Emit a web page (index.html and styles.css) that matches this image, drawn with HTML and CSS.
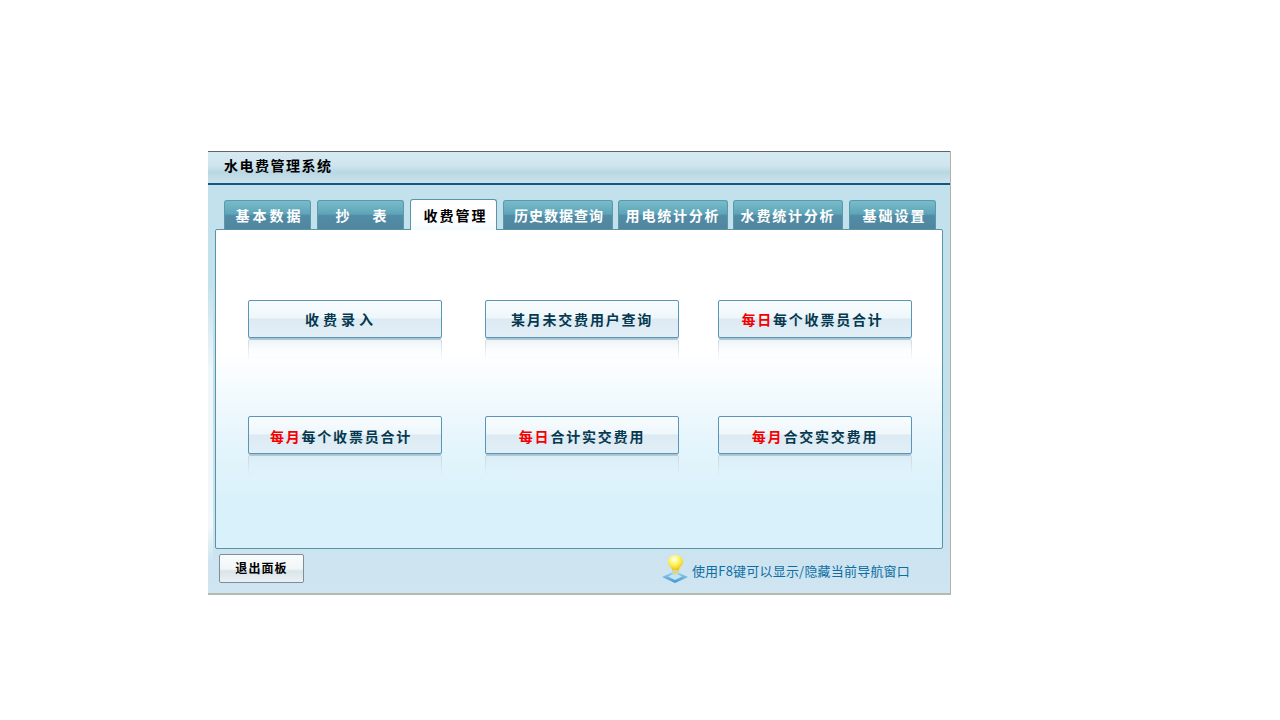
FILE: index.html
```html
<!DOCTYPE html>
<html lang="zh-CN">
<head>
<meta charset="utf-8">
<title>水电费管理系统</title>
<link rel="stylesheet" href="styles.css">
</head>
<body>
<main class="window">
  <header class="titlebar"><h1 class="title">水电费管理系统</h1></header>
  <div class="content">
    <nav class="tabs">
      <a class="tab w87 sp3 pl3">基本数据</a>
      <a class="tab w87 gap-chao"><span>抄</span><span>表</span></a>
      <a class="tab tab-active w87 sp2 pl3">收费管理</a>
      <a class="tab w110 sp1 pl1">历史数据查询</a>
      <a class="tab w110 t-narrow">用电统计分析</a>
      <a class="tab w110 t-narrow">水费统计分析</a>
      <a class="tab w87 sp2 pl3">基础设置</a>
    </nav>
    <section class="panel">
      <div class="grid">
        <button class="btn sp4 shift-l">收费录入</button>
        <button class="btn sp18">某月未交费用户查询</button>
        <button class="btn sp18 shift-s"><em>每日</em>每个收票员合计</button>
        <button class="btn sp18 shift-l low"><em>每月</em>每个收票员合计</button>
        <button class="btn sp18 low"><em>每日</em>合计实交费用</button>
        <button class="btn sp18 low"><em>每月</em>合交实交费用</button>
      </div>
    </section>
    <footer class="footer">
      <button class="exit">退出面板</button>
      <div class="hint">
        <svg class="bulb" width="27" height="28" viewBox="0 0 27 28" aria-hidden="true">
          <defs>
            <radialGradient id="glow" cx="0.42" cy="0.3" r="0.75">
              <stop offset="0" stop-color="#fffff0"/>
              <stop offset="0.5" stop-color="#fdf256"/>
              <stop offset="1" stop-color="#e9bb14"/>
            </radialGradient>
            <linearGradient id="plate" x1="0" y1="0" x2="0" y2="1">
              <stop offset="0" stop-color="#a8d8f3"/>
              <stop offset="1" stop-color="#3d94cf"/>
            </linearGradient>
          </defs>
          <path d="M0 22 L13 16 L26 22 L13 28 Z" fill="url(#plate)"/>
          <path d="M6 21.5 L13 18 L20 21.5 L13 25 Z" fill="#c2e4f6"/>
          <path d="M10 15 C10 12 6 11 6 7 C6 3 9 0 13.5 0 C18 0 21 3 21 7 C21 11 17 12 17 15 Z" fill="url(#glow)"/>
          <path d="M10 15 H17 V18 C16 20 11 20 10 18 Z" fill="#d8d59a"/>
        </svg>
        <span class="hint-text">使用F8键可以显示/隐藏当前导航窗口</span>
      </div>
    </footer>
  </div>
</main>
</body>
</html>
```

FILE: styles.css
```css
* { box-sizing: border-box; }

html, body {
  margin: 0;
  padding: 0;
  background: #fff;
}

body {
  padding: 151px 0 0 208px;
  font-family: "Noto Sans CJK SC", "Liberation Sans", sans-serif;
}

.window {
  width: 743px;
  height: 444px;
  display: flex;
  flex-direction: column;
  border-right: 1px solid #b3b2a6;
  border-bottom: 2px solid #b4b9b2;
  background:
    linear-gradient(180deg, rgba(255, 255, 255, 0) 30%, rgba(255, 255, 255, 0.75) 50%, rgba(255, 255, 255, 0.75) 85%, rgba(255, 255, 255, 0) 93%) left top / 5px 100% no-repeat,
    linear-gradient(180deg, #c2e1ed 0%, #c3e1ed 60%, #cfe5f1 100%);
}

.titlebar {
  height: 34px;
  padding-left: 16px;
  display: flex;
  align-items: center;
  border-top: 1px solid #5f6569;
  border-bottom: 2px solid #14587c;
  background: linear-gradient(180deg, #d6e9f1 0%, #cfe5ee 45%, #b9d7e2 65%, #cde3ec 100%);
}

.title {
  margin: 0 0 5px;
  font-size: 14px;
  line-height: 20px;
  font-weight: 700;
  letter-spacing: 1.5px;
  color: #000;
}

.content {
  flex: 1;
  display: flex;
  flex-direction: column;
  padding: 14px 0 0 7px;
}

.tabs {
  display: flex;
  align-items: flex-end;
  height: 31px;
  padding-left: 9px;
  position: relative;
  z-index: 1;
}

.tab {
  height: 29px;
  margin: 0 6px 1px 0;
  padding-bottom: 1px;
  display: flex;
  align-items: center;
  justify-content: center;
  border: 1px solid #5b98aa;
  border-bottom: 0;
  border-radius: 3px 3px 0 0;
  background: linear-gradient(180deg, #76bccb 0%, #5fa5b8 46%, #528ca6 52%, #50859f 100%);
  color: #fff;
  font-size: 14px;
  font-weight: 700;
  white-space: nowrap;
}

.w87 { width: 87px; }
.w110 { width: 110px; margin-right: 5px; }

.tab:nth-child(6) { margin-right: 6px; }

.sp1 { letter-spacing: 1px; }
.sp18 { letter-spacing: 1.8px; }
.sp2 { letter-spacing: 2px; }
.sp3 { letter-spacing: 3px; }
.sp4 { letter-spacing: 4px; }
.t-narrow { letter-spacing: 1.8px; }
.pl1 { padding-left: 2px; }
.pl3 { padding-left: 4px; }

.gap-chao { gap: 23px; padding-left: 1px; }

.tab-active {
  height: 31px;
  margin-bottom: 0;
  border-color: #5b94a8;
  background: linear-gradient(180deg, #fff 0%, #fff 60%, #f3fbfd 100%);
  color: #000;
}

.panel {
  width: 728px;
  height: 320px;
  margin-top: -1px;
  padding: 70px 0 0 32px;
  border: 1px solid #5a93a3;
  border-radius: 2px;
  background: linear-gradient(180deg, #fff 0%, #fff 38%, #e4f5fc 68%, #d9f1fb 85%, #d9f1fb 100%);
}

.grid {
  display: grid;
  grid-template-columns: 237px 233px 194px;
  grid-auto-rows: 38px;
  row-gap: 78px;
}

.btn {
  position: relative;
  width: 194px;
  padding: 0;
  font: inherit;
  font-size: 14px;
  font-weight: 700;
  color: #06394f;
  border: 1px solid #5a94b6;
  border-radius: 2px;
  background: linear-gradient(180deg, #f8fcfe 0%, #eff7fb 47%, #dceaf3 50%, #e2eff7 100%);
  box-shadow: 0 1px 0 #a8c4d4;
}

.low { padding-top: 2px; }
.shift-l { padding-right: 8px; }
.shift-s { padding-right: 5px; }

.btn::after {
  content: "";
  position: absolute;
  left: -1px;
  right: -1px;
  top: 38px;
  height: 20px;
  border-left: 1px solid #c8d6dd;
  border-right: 1px solid #c8d6dd;
  border-top: 1px solid #b4c7d1;
  border-radius: 2px 2px 0 0;
  background: linear-gradient(180deg, rgba(205, 224, 235, 0.4) 0%, rgba(255, 255, 255, 0) 100%);
  -webkit-mask-image: linear-gradient(180deg, #000 0%, transparent 100%);
  mask-image: linear-gradient(180deg, #000 0%, transparent 100%);
}

.btn em {
  font-style: normal;
  color: #f40000;
}

.footer {
  flex: 1;
  display: flex;
  align-items: flex-start;
  justify-content: space-between;
  padding: 5px 40px 0 4px;
}

.exit {
  width: 85px;
  height: 29px;
  padding: 0 0 2px;
  font: inherit;
  font-size: 12px;
  font-weight: 700;
  letter-spacing: 1.1px;
  color: #000;
  border: 1px solid #7d8f96;
  border-radius: 2px;
  background: linear-gradient(180deg, #fafcfc 0%, #f2f6f7 50%, #d9e5ea 60%, #eaf1f4 100%);
}

.hint {
  display: flex;
  align-items: flex-start;
  gap: 3px;
  color: #0d6ea3;
  font-size: 13px;
  line-height: 28px;
}

.hint-text {
  margin-top: 3px;
  letter-spacing: 0.2px;
}

.bulb {
  display: block;
  margin-top: 1px;
}
```
